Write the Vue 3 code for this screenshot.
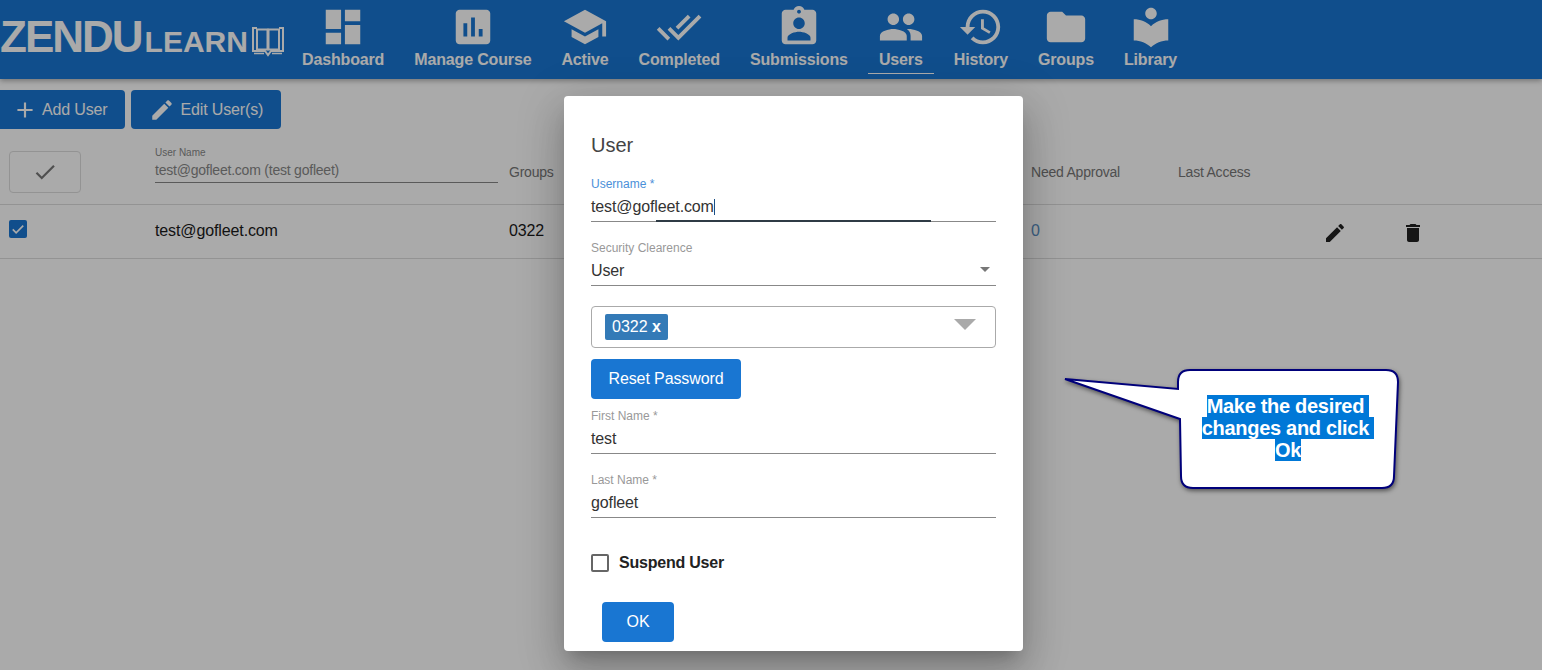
<script setup>
const navItems = [
  { label: 'Dashboard', d: 'M3 13h8V3H3v10zm0 8h8v-6H3v6zm10 0h8V11h-8v10zm0-18v6h8V3h-8z' },
  { label: 'Manage Course', d: 'M19 3H5c-1.1 0-2 .9-2 2v14c0 1.1.9 2 2 2h14c1.1 0 2-.9 2-2V5c0-1.1-.9-2-2-2zM9 17H7v-7h2v7zm4 0h-2V7h2v10zm4 0h-2v-4h2v4z' },
  { label: 'Active', d: 'M5 13.18v4L12 21l7-3.82v-4L12 17l-7-3.82zM12 3L1 9l11 6 9-4.91V17h2V9L12 3z' },
  { label: 'Completed', d: 'M18 7l-1.41-1.41-6.34 6.34 1.41 1.41L18 7zm4.24-1.41L11.66 16.17 7.48 12l-1.41 1.41L11.66 19l12-12-1.42-1.41zM.41 13.41L6 19l1.41-1.41L1.83 12 .41 13.41z' },
  { label: 'Submissions', d: 'M19 3h-4.18C14.4 1.84 13.3 1 12 1c-1.3 0-2.4.84-2.82 2H5c-1.1 0-2 .9-2 2v14c0 1.1.9 2 2 2h14c1.1 0 2-.9 2-2V5c0-1.1-.9-2-2-2zm-7 0c.55 0 1 .45 1 1s-.45 1-1 1-1-.45-1-1 .45-1 1-1zm0 4c1.66 0 3 1.34 3 3s-1.34 3-3 3-3-1.34-3-3 1.34-3 3-3zm6 12H6v-1.4c0-2 4-3.1 6-3.1s6 1.1 6 3.1V19z' },
  { label: 'Users', active: true, d: 'M16 11c1.66 0 2.99-1.34 2.99-3S17.66 5 16 5c-1.66 0-3 1.34-3 3s1.34 3 3 3zm-8 0c1.66 0 2.99-1.34 2.99-3S9.66 5 8 5C6.34 5 5 6.34 5 8s1.34 3 3 3zm0 2c-2.33 0-7 1.17-7 3.5V19h14v-2.5c0-2.33-4.67-3.5-7-3.5zm8 0c-.29 0-.62.02-.97.05 1.16.84 1.97 1.97 1.97 3.45V19h6v-2.5c0-2.33-4.67-3.5-7-3.5z' },
  { label: 'History', d: 'M13 3c-4.97 0-9 4.03-9 9H1l3.89 3.89.07.14L9 12H6c0-3.87 3.13-7 7-7s7 3.13 7 7-3.13 7-7 7c-1.93 0-3.68-.79-4.94-2.06l-1.42 1.42C8.27 19.99 10.51 21 13 21c4.97 0 9-4.03 9-9s-4.03-9-9-9zm-1 5v5l4.28 2.54.72-1.21-3.5-2.08V8H12z' },
  { label: 'Groups', d: 'M10 4H4c-1.1 0-1.99.9-1.99 2L2 18c0 1.1.9 2 2 2h16c1.1 0 2-.9 2-2V8c0-1.1-.9-2-2-2h-8l-2-2z' },
  { label: 'Library', d: 'M12 11.55C9.64 9.35 6.48 8 3 8v11c3.48 0 6.64 1.35 9 3.55 2.36-2.19 5.52-3.55 9-3.55V8c-3.48 0-6.64 1.35-9 3.55zM12 8c1.66 0 3-1.34 3-3s-1.34-3-3-3-3 1.34-3 3 1.34 3 3 3z' }
]

const editIcon = 'M3 17.25V21h3.75L17.81 9.94l-3.75-3.75L3 17.25zM20.71 7.04c.39-.39.39-1.02 0-1.41l-2.34-2.34c-.39-.39-1.02-.39-1.41 0l-1.83 1.83 3.75 3.75 1.83-1.83z'
const deleteIcon = 'M6 19c0 1.1.9 2 2 2h8c1.1 0 2-.9 2-2V7H6v12zM19 4h-3.5l-1-1h-5l-1 1H5v2h14V4z'
</script>

<template>
  <div class="page">
    <header class="topbar">
      <div class="logo">
        <span class="logo-zendu">ZENDU</span>
        <span class="logo-learn">LEARN</span>
        <svg class="logo-book" viewBox="0 0 32 31" fill="none" stroke="#fff" stroke-width="2">
          <path d="M15.500 3.500H5v20h10.500z" />
          <path d="M16.500 3.500H27v20H16.500z" />
          <path d="M5 2H1v23h12l3 4 3-4h12V2h-4" />
          <path d="M2 27.500h10M20 27.500h10" stroke-width="1.500" />
        </svg>
      </div>
      <nav class="nav">
        <a v-for="item in navItems" :key="item.label" class="nav-item" :class="{ active: item.active }">
          <svg class="nav-icon" viewBox="0 0 24 24" fill="#fff"><path :d="item.d" /></svg>
          <span>{{ item.label }}</span>
        </a>
      </nav>
    </header>

    <div class="toolbar">
      <button class="tool-btn add-btn">
        <svg viewBox="0 0 24 24" fill="#fff"><path d="M19 13h-6v6h-2v-6H5v-2h6V5h2v6h6v2z" /></svg>
        Add User
      </button>
      <button class="tool-btn edit-btn">
        <svg viewBox="0 0 24 24" fill="#fff"><path :d="editIcon" /></svg>
        Edit User(s)
      </button>
    </div>

    <div class="table">
      <div class="row head-row">
        <div class="cell-check">
          <div class="check-all">
            <svg viewBox="0 0 24 24" fill="#777"><path d="M9 16.170L4.830 12l-1.420 1.410L9 19 21 7l-1.410-1.410z" /></svg>
          </div>
        </div>
        <div class="filter">
          <label>User Name</label>
          <div class="filter-value">test@gofleet.com (test gofleet)</div>
        </div>
        <div class="head-label">Groups</div>
        <div class="head-label">Need Approval</div>
        <div class="head-label">Last Access</div>
      </div>
      <div class="row body-row">
        <div class="cell-check">
          <span class="row-check">
            <svg viewBox="0 0 24 24" fill="none" stroke="#fff" stroke-width="2.200"><path d="M5 12.500l4.500 4.500L19 7.500" /></svg>
          </span>
        </div>
        <div>test@gofleet.com</div>
        <div>0322</div>
        <div class="approval">0</div>
        <div></div>
        <svg class="row-icon" viewBox="0 0 24 24" fill="#222"><path :d="editIcon" /></svg>
        <svg class="row-icon" viewBox="0 0 24 24" fill="#222"><path :d="deleteIcon" /></svg>
      </div>
    </div>

    <div class="overlay"></div>

    <div class="dialog">
      <h2>User</h2>

      <div class="field focused">
        <label>Username *</label>
        <div class="field-input">test@gofleet.com<i class="caret"></i></div>
      </div>

      <div class="field">
        <label>Security Clearence</label>
        <div class="field-input select">User<i class="select-arrow"></i></div>
      </div>

      <div class="multi">
        <span class="chip">0322 <b>x</b></span>
        <i class="multi-arrow"></i>
      </div>

      <button class="btn reset-btn">Reset Password</button>

      <div class="field">
        <label>First Name *</label>
        <div class="field-input">test</div>
      </div>

      <div class="field">
        <label>Last Name *</label>
        <div class="field-input">gofleet</div>
      </div>

      <div class="suspend">
        <span class="box"></span>
        <span>Suspend User</span>
      </div>

      <button class="btn ok-btn">OK</button>
    </div>

    <div class="callout">
      <svg class="callout-shape" viewBox="0 0 340 124" fill="#fff" stroke="#00007a" stroke-width="2">
        <path d="M1 11L114 21V14Q114 2 126 2H322Q334 2 334 14L330 108Q330 120 318 120H129Q117 120 117 108L116 51z" />
      </svg>
      <div class="callout-text">
        <span>Make the desired </span>
        <span>changes and click </span>
        <span>Ok</span>
      </div>
    </div>
  </div>
</template>

<style scoped>
.page {
  position: relative;
  width: 1542px;
  height: 670px;
  overflow: hidden;
  background: #fff;
  font-family: "Liberation Sans", Arial, sans-serif;
  color: #1a1a1a;
}

.topbar {
  display: flex;
  height: 79px;
  background: #1976d2;
  box-shadow: 0 2px 5px rgba(0, 0, 0, 0.3);
  color: #fff;
}

.logo {
  display: flex;
  align-items: flex-end;
  width: 292px;
  height: 60px;
  flex-shrink: 0;
  font-weight: 700;
  white-space: nowrap;
}

.logo-zendu {
  font-size: 44px;
  line-height: 44px;
  letter-spacing: -2px;
  margin-bottom: 1px;
}

.logo-learn {
  font-size: 30px;
  line-height: 30px;
  margin-left: 3px;
  margin-bottom: 3px;
}

.logo-book {
  width: 32px;
  height: 31px;
  margin-left: 4px;
  margin-bottom: 3px;
}

.nav {
  display: flex;
  gap: 10px;
}

.nav-item {
  display: flex;
  flex-direction: column;
  align-items: center;
  height: 69px;
  padding: 4px 10px 0;
  font-size: 16px;
  font-weight: 700;
  line-height: 18px;
  letter-spacing: -0.15px;
  white-space: nowrap;
}

.nav-item span {
  margin-top: 1px;
}

.nav-item.active {
  border-bottom: 1px solid #fff;
}

.nav-icon {
  width: 46px;
  height: 46px;
}

.toolbar {
  display: flex;
  gap: 6px;
  margin: 11px 0 0 -7px;
}

.tool-btn {
  display: flex;
  align-items: center;
  height: 39px;
  border: 0;
  border-radius: 4px;
  background: #1976d2;
  color: #fff;
  font: 16px "Liberation Sans", Arial, sans-serif;
  letter-spacing: -0.15px;
  white-space: nowrap;
}

.tool-btn svg {
  width: 26px;
  height: 26px;
}

.add-btn {
  padding: 0 17px 0 20px;
}

.add-btn svg {
  margin: 0 4px 0 -1px;
}

.edit-btn {
  padding: 0 18px;
}

.edit-btn svg {
  margin-right: 6px;
}

.row {
  display: grid;
  grid-template-columns: 155px 354px 522px 147px 145px 78px 24px;
  align-items: center;
  border-bottom: 1px solid #ddd;
}

.head-row {
  height: 75px;
  font-size: 14px;
  letter-spacing: -0.22px;
  color: #777;
}

.head-row .head-label {
  padding-top: 11px;
}

.check-all {
  display: flex;
  align-items: center;
  justify-content: center;
  width: 70px;
  height: 40px;
  margin: 11px 0 0 9px;
  border: 1px solid #ddd;
  border-radius: 4px;
}

.check-all svg {
  width: 26px;
  height: 26px;
}

.filter {
  width: 343px;
  margin-bottom: 3px;
  border-bottom: 1px solid #888;
}

.filter label {
  display: block;
  font-size: 10px;
  line-height: 12px;
  letter-spacing: 0;
  color: #888;
}

.filter-value {
  line-height: 20px;
  padding-bottom: 2px;
  margin-top: 1px;
  color: #888;
}

.body-row {
  height: 53px;
  font-size: 16px;
  letter-spacing: -0.12px;
}

.body-row > div {
  margin-top: -2px;
}

.row-check {
  display: flex;
  width: 18px;
  height: 18px;
  margin: -4px 0 0 9px;
  border-radius: 2px;
  background: #1976d2;
}

.approval {
  color: #5a8fc4;
}

.row-icon {
  width: 24px;
  height: 24px;
  margin-top: 2px;
}

.overlay {
  position: absolute;
  inset: 0;
  background: rgba(0, 0, 0, 0.335);
}

.dialog {
  position: absolute;
  top: 96px;
  left: 564px;
  box-sizing: border-box;
  width: 459px;
  height: 555px;
  padding: 37px 27px 0;
  border-radius: 4px;
  background: #fff;
  box-shadow: 0 11px 15px -7px rgba(0, 0, 0, 0.2), 0 24px 38px 3px rgba(0, 0, 0, 0.14), 0 9px 46px 8px rgba(0, 0, 0, 0.12);
}

.dialog h2 {
  margin: 0 0 20px;
  font-size: 20px;
  font-weight: 400;
  line-height: 24px;
  color: #444;
}

.field {
  position: relative;
  height: 64px;
}

.field label {
  display: block;
  font-size: 12px;
  line-height: 14px;
  color: #999;
}

.field.focused label {
  color: #4a90d9;
}

.field.focused::after {
  content: "";
  position: absolute;
  left: 65px;
  top: 43px;
  width: 275px;
  height: 2px;
  background: #2f3b45;
}

.field-input {
  position: relative;
  box-sizing: border-box;
  height: 31px;
  padding-top: 4px;
  border-bottom: 1px solid #888;
  font-size: 16px;
  line-height: 24px;
  letter-spacing: -0.12px;
  color: #333;
}

.caret {
  display: inline-block;
  width: 1px;
  height: 16px;
  vertical-align: -3px;
  background: #1a4f85;
}

.select-arrow {
  position: absolute;
  right: 6px;
  top: 12px;
  border-top: 5px solid #777;
  border-left: 5px solid transparent;
  border-right: 5px solid transparent;
}

.multi {
  position: relative;
  display: flex;
  align-items: center;
  box-sizing: border-box;
  height: 42px;
  margin-top: 1px;
  padding-left: 13px;
  border: 1px solid #aaa;
  border-radius: 4px;
}

.chip {
  height: 26px;
  padding: 0 7px;
  border-radius: 2px;
  background: #337ab7;
  color: #fff;
  font-size: 16px;
  line-height: 25px;
}

.chip b {
  font-size: 16px;
  font-weight: 700;
}

.multi-arrow {
  position: absolute;
  right: 19px;
  top: 12px;
  border-top: 11px solid #aaa;
  border-left: 11px solid transparent;
  border-right: 11px solid transparent;
}

.btn {
  display: block;
  height: 40px;
  border: 0;
  border-radius: 4px;
  background: #1976d2;
  color: #fff;
  font: 16px "Liberation Sans", Arial, sans-serif;
}

.reset-btn {
  width: 150px;
  margin: 11px 0 10px;
  letter-spacing: -0.1px;
}

.suspend {
  display: flex;
  align-items: center;
  gap: 10px;
  margin-top: 17px;
  font-size: 16px;
  font-weight: 700;
  line-height: 18px;
  letter-spacing: -0.22px;
  color: #222;
}

.box {
  box-sizing: border-box;
  width: 18px;
  height: 18px;
  border: 2px solid #666;
  border-radius: 2px;
}

.ok-btn {
  width: 72px;
  margin: 30px 0 0 11px;
}

.callout {
  position: absolute;
  left: 1064px;
  top: 368px;
  width: 340px;
  height: 124px;
}

.callout-shape {
  display: block;
  width: 340px;
  height: 124px;
  filter: drop-shadow(1px 2px 2px rgba(0, 0, 0, 0.5));
}

.callout-text {
  position: absolute;
  left: 114px;
  top: 27px;
  width: 220px;
  text-align: center;
  font-size: 20px;
  font-weight: 700;
  line-height: 22px;
  letter-spacing: -0.3px;
  color: #fff;
}

.callout-text span {
  display: table;
  margin: 0 auto;
  background: #0078d7;
  white-space: pre;
}
</style>
